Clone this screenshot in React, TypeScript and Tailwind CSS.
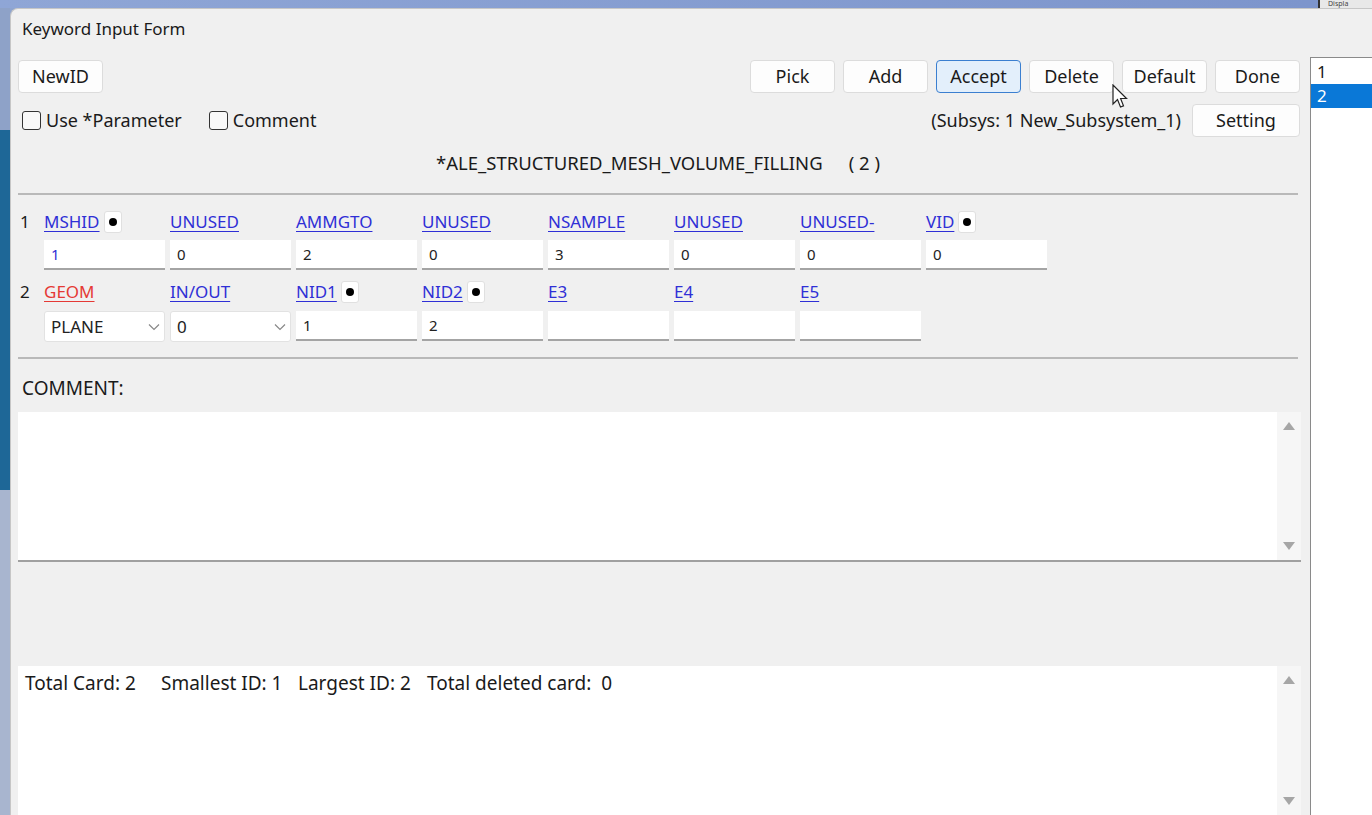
import React from "react";

const font = { fontFamily: '"Noto Sans", "Open Sans", sans-serif' };

function Btn({ label, active, className = "" }: { label: string; active?: boolean; className?: string }) {
  return (
    <div
      className={
        "flex h-[33px] w-[85px] items-center justify-center rounded-[4px] border text-[18px] text-[#1a1a1a] " +
        (active ? "border-[#3b7fd0] bg-[#e3effb]" : "border-[#dcdcdc] bg-[#fdfdfd]") +
        " " +
        className
      }
    >
      {label}
    </div>
  );
}

function Check({ label }: { label: string }) {
  return (
    <div className="flex items-center gap-[5px] text-[18px] text-[#1a1a1a]">
      <div className="h-[19px] w-[19px] rounded-[3px] border border-[#333] bg-[#f8f8f8]" />
      <span>{label}</span>
    </div>
  );
}

function Dot() {
  return (
    <div className="ml-[4px] flex h-[22px] w-[18px] items-center justify-center rounded-[3px] border border-[#e0e0e0] bg-white">
      <div className="h-[8px] w-[8px] rounded-full bg-black" />
    </div>
  );
}

type Field = { name: string; dot?: boolean; red?: boolean };

function LabelRow({ num, fields }: { num: string; fields: Field[] }) {
  return (
    <div className="flex h-[24px] items-center">
      <div className="w-[26px] pl-[2px] text-[17px] text-[#1a1a1a]">{num}</div>
      {fields.map((f) => (
        <div key={f.name + num} className="flex w-[126px] items-center">
          <span
            className={
              "text-[17px] underline underline-offset-[3px] " + (f.red ? "text-[#e53935]" : "text-[#2f2fd6]")
            }
          >
            {f.name}
          </span>
          {f.dot && <Dot />}
        </div>
      ))}
    </div>
  );
}

function Input({ value, blue }: { value: string; blue?: boolean }) {
  return (
    <div
      className={
        "mr-[5px] flex h-[30px] w-[121px] items-center border-b-2 border-[#a4a4a4] bg-white pl-[7px] text-[15px] " +
        (blue ? "text-[#2f2fd6]" : "text-[#222]")
      }
    >
      {value}
    </div>
  );
}

function Select({ value }: { value: string }) {
  return (
    <div className="mr-[5px] flex h-[31px] w-[121px] items-center justify-between rounded-[3px] border border-[#e2e2e2] bg-white pl-[6px] pr-[4px] text-[17px] text-[#222]">
      <span>{value}</span>
      <svg width="12" height="8" viewBox="0 0 12 8">
        <path d="M1 1.5 L6 6.5 L11 1.5" fill="none" stroke="#888" strokeWidth="1.2" />
      </svg>
    </div>
  );
}

function ScrollBar() {
  return (
    <div className="flex w-[24px] flex-col items-center justify-between bg-[#f6f6f6] py-[10px]">
      <svg width="12" height="8" viewBox="0 0 12 8">
        <path d="M6 0 L12 8 L0 8 Z" fill="#a6a6a6" />
      </svg>
      <svg width="12" height="8" viewBox="0 0 12 8">
        <path d="M0 0 L12 0 L6 8 Z" fill="#a6a6a6" />
      </svg>
    </div>
  );
}

export default function App() {
  const row1: Field[] = [
    { name: "MSHID", dot: true },
    { name: "UNUSED" },
    { name: "AMMGTO" },
    { name: "UNUSED" },
    { name: "NSAMPLE" },
    { name: "UNUSED" },
    { name: "UNUSED-" },
    { name: "VID", dot: true },
  ];
  const row2: Field[] = [
    { name: "GEOM", red: true },
    { name: "IN/OUT" },
    { name: "NID1", dot: true },
    { name: "NID2", dot: true },
    { name: "E3" },
    { name: "E4" },
    { name: "E5" },
  ];

  return (
    <div className="flex h-[815px] w-[1372px] flex-col overflow-hidden bg-[#8ea4cf]" style={font}>
      {/* desktop strip on top */}
      <div className="flex h-[8px] shrink-0">
        <div className="flex-1 bg-gradient-to-r from-[#8fa6d6] to-[#7d95cc]" />
        <div className="w-[8px] bg-[#7d95cc]" />
        <div className="w-[2px] bg-[#333]" />
        <div className="flex w-[52px] items-center overflow-hidden bg-[#e8e8e8] pl-[8px] text-[7px] leading-[8px] text-[#444]">
          Displa
        </div>
      </div>

      <div className="flex flex-1">
        {/* desktop strip on left */}
        <div className="flex w-[10px] shrink-0 flex-col">
          <div className="h-[122px] bg-[#8ea2c8]" />
          <div className="h-[360px] bg-[#1e6797]" />
          <div className="flex-1 bg-[#a8b5cf]" />
        </div>

        {/* window */}
        <div className="relative flex flex-1 rounded-tl-[8px] border-l border-t border-[#c6c6c6] bg-[#f0f0f0] text-[#1a1a1a]">
          <div className="flex w-[1299px] shrink-0 flex-col pl-[7px]">
            <div className="mt-[9px] h-[22px] pl-[4px] text-[17px] leading-[22px]">Keyword Input Form</div>

            <div className="mt-[20px] flex items-center">
              <Btn label="NewID" className="w-[84px]" />
              <div className="ml-auto mr-[10px] flex gap-[8px]">
                <Btn label="Pick" />
                <Btn label="Add" />
                <Btn label="Accept" active />
                <Btn label="Delete" />
                <Btn label="Default" />
                <Btn label="Done" />
              </div>
            </div>

            <div className="mt-[11px] flex h-[33px] items-center">
              <div className="ml-[4px] flex gap-[27px]">
                <Check label="Use *Parameter" />
                <Check label="Comment" />
              </div>
              <div className="ml-auto mr-[10px] flex items-center gap-[11px]">
                <span className="text-[18px]">(Subsys: 1 New_Subsystem_1)</span>
                <Btn label="Setting" className="w-[108px]" />
              </div>
            </div>

            <div className="mt-[14px] flex h-[24px] items-center justify-center pr-[12px] text-[18.5px]">
              <span>*ALE_STRUCTURED_MESH_VOLUME_FILLING</span>
              <span className="ml-[26px]">( 2 )</span>
            </div>

            <div className="mr-[12px] mt-[18px] border-t-2 border-[#b9b9b9]" />

            <div className="mt-[15px]">
              <LabelRow num="1" fields={row1} />
            </div>
            <div className="mt-[6px] flex pl-[26px]">
              <Input value="1" blue />
              <Input value="0" />
              <Input value="2" />
              <Input value="0" />
              <Input value="3" />
              <Input value="0" />
              <Input value="0" />
              <Input value="0" />
            </div>

            <div className="mt-[10px]">
              <LabelRow num="2" fields={row2} />
            </div>
            <div className="mt-[7px] flex pl-[26px]">
              <Select value="PLANE" />
              <Select value="0" />
              <Input value="1" />
              <Input value="2" />
              <Input value="" />
              <Input value="" />
              <Input value="" />
            </div>

            <div className="mr-[12px] mt-[15px] border-t-2 border-[#b9b9b9]" />

            <div className="mt-[17px] flex h-[24px] items-center pl-[4px] text-[19px]">COMMENT:</div>

            <div className="mr-[9px] mt-[12px] flex h-[150px] border-b-2 border-[#a0a0a0] bg-white">
              <div className="flex-1" />
              <ScrollBar />
            </div>

            <div className="mr-[9px] mt-[104px] flex flex-1 bg-white">
              <div className="flex flex-1 items-start pl-[7px] pt-[3px] text-[19px] whitespace-pre">
                <span className="w-[136px]">Total Card: 2</span>
                <span className="w-[137px]">Smallest ID: 1</span>
                <span className="w-[129px]">Largest ID: 2</span>
                <span>{"Total deleted card:  0"}</span>
              </div>
              <ScrollBar />
            </div>
          </div>

          {/* id list on the right */}
          <div className="flex flex-1 flex-col pt-[48px]">
            <div className="flex flex-1 flex-col border-l border-t border-[#8a8a8a] bg-white pt-[2px] text-[17px]">
              <div className="h-[24px] pl-[6px] leading-[24px] text-[#1a1a1a]">1</div>
              <div className="h-[24px] bg-[#0a78d7] pl-[6px] leading-[24px] text-white">2</div>
            </div>
          </div>

          {/* mouse cursor */}
          <svg className="absolute left-[1101px] top-[75px]" width="16" height="26" viewBox="0 0 16 26">
            <path d="M1 1 L1 20 L5.5 15.5 L8.5 23 L11.5 21.8 L8.6 14.5 L14.5 14.5 Z" fill="white" stroke="#222" strokeWidth="1.2" />
          </svg>
        </div>
      </div>
    </div>
  );
}
